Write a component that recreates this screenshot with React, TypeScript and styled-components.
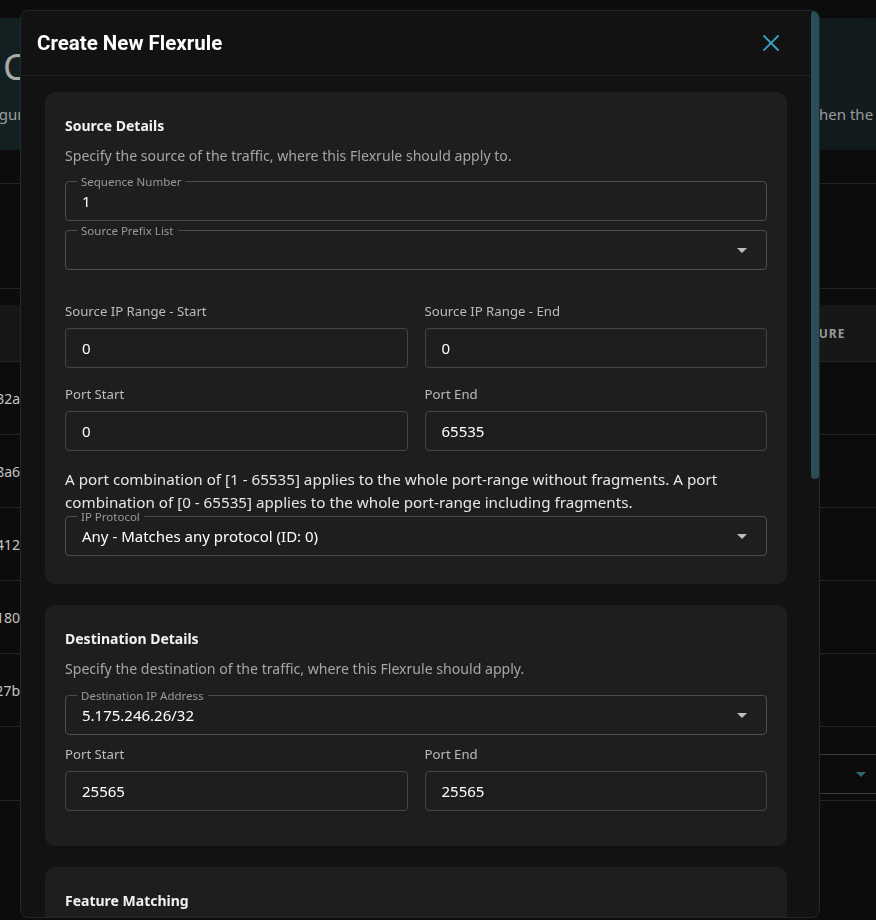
import React from 'react';
import styled, { createGlobalStyle } from 'styled-components';

const GlobalStyle = createGlobalStyle`
  html, body { margin: 0; padding: 0; background: #0c0c0c; overflow: hidden; }
  body { font-family: "Noto Sans", "Open Sans", sans-serif; }
  * { box-sizing: border-box; }
`;

/* ---------- background page ---------- */
const Page = styled.div`
  width: 880px;
  padding-top: 18px;
  color: #bdbdbd;
`;
const Banner = styled.div`
  height: 132px;
  background: linear-gradient(90deg, #132022 0%, #111a1c 100%);
  padding: 29px 0 0 3px;
  overflow: hidden;
`;
const BannerTitle = styled.div`
  font-size: 36px;
  line-height: 40px;
  color: #a9a9a9;
  white-space: nowrap;
`;
const BannerText = styled.div`
  margin-top: 16px;
  font-size: 15px;
  line-height: 22px;
  color: #9c9c9c;
  white-space: nowrap;
  text-indent: -41px;
`;
const BannerLink = styled.span`
  color: #3b82c4;
`;
const Toolbar = styled.div`
  margin-top: 33px;
  height: 106px;
  border-top: 1px solid #1c2729;
  border-bottom: 1px solid #1c2729;
`;
const Table = styled.div`
  margin-top: 16px;
`;
const TRow = styled.div<{ $head?: boolean }>`
  display: grid;
  grid-template-columns: 20px 1fr 93px;
  align-items: center;
  height: ${p => (p.$head ? 57 : 73)}px;
  background: ${p => (p.$head ? '#171717' : 'transparent')};
  border-bottom: 1px solid #242424;
`;
const IdCell = styled.div`
  display: flex;
  justify-content: flex-end;
  white-space: nowrap;
  font-size: 14px;
  color: #c4c4c4;
`;
const HeadCell = styled.div`
  font-size: 12px;
  font-weight: 700;
  letter-spacing: 1px;
  color: #9a9a9a;
  white-space: nowrap;
`;
const TFooter = styled.div`
  height: 74px;
  padding-top: 27px;
  display: flex;
  justify-content: flex-end;
  border-bottom: 1px solid #242424;
`;
const PagerSelect = styled.div`
  width: 300px;
  height: 40px;
  border: 1px solid #3a3a3a;
  border-radius: 4px;
  display: flex;
  align-items: center;
  justify-content: flex-end;
  padding-right: 13px;
`;

/* ---------- modal ---------- */
const Overlay = styled.div`
  position: fixed;
  inset: 0;
  display: flex;
  align-items: flex-start;
  padding: 10px 0 0 20px;
`;
const Modal = styled.div`
  width: 800px;
  height: 908px;
  background: #121212;
  border: 1px solid #1c2a2d;
  border-radius: 8px;
  display: flex;
  overflow: hidden;
`;
const ScrollArea = styled.div`
  flex: 1;
  min-width: 0;
  overflow-y: auto;
  scrollbar-width: none;
  &::-webkit-scrollbar { display: none; }
`;
const ScrollRail = styled.div`
  width: 8px;
  flex: none;
`;
const ScrollThumb = styled.div`
  height: 468px;
  background: #2a4d57;
  border-radius: 4px;
`;
const Header = styled.div`
  height: 65px;
  display: flex;
  align-items: center;
  justify-content: space-between;
  padding: 0 20px 0 16px;
  border-bottom: 1px solid #222;
`;
const Title = styled.h2`
  margin: 0;
  font-family: Roboto, "Noto Sans", sans-serif;
  font-size: 20.5px;
  font-weight: 700;
  color: #fff;
`;
const CloseButton = styled.button`
  width: 40px;
  height: 40px;
  border: 0;
  background: transparent;
  display: flex;
  align-items: center;
  justify-content: center;
  padding: 0;
  cursor: pointer;
`;
const Body = styled.div`
  padding: 16px 24px 24px;
  display: flex;
  flex-direction: column;
  gap: 21px;
`;
const Card = styled.section<{ $pb: number }>`
  background: #1e1e1e;
  border-radius: 10px;
  padding: 23px 20px ${p => p.$pb}px;
`;
const CardTitle = styled.h3`
  margin: 0 0 8px;
  font-size: 14px;
  line-height: 22px;
  font-weight: 700;
  color: #f2f2f2;
`;
const CardSub = styled.p<{ $mb?: number }>`
  margin: 0 0 ${p => p.$mb ?? 14}px;
  font-size: 14.1px;
  line-height: 22px;
  color: #a6a6a6;
`;
const Outlined = styled.div<{ $mt?: number }>`
  position: relative;
  height: 40px;
  margin-top: ${p => p.$mt ?? 0}px;
  border: 1px solid #4d4d4d;
  border-radius: 4px;
  display: flex;
  align-items: center;
  justify-content: space-between;
  padding: 0 19px 0 16px;
  font-size: 15px;
  color: #fff;
`;
const FloatLabel = styled.span`
  position: absolute;
  top: -7px;
  left: 11px;
  padding: 0 4px;
  background: #1e1e1e;
  font-size: 11.5px;
  line-height: 13px;
  color: #9a9a9a;
`;
const Caret = styled.span<{ $color?: string }>`
  width: 0;
  height: 0;
  border-left: 5px solid transparent;
  border-right: 5px solid transparent;
  border-top: 5px solid ${p => p.$color ?? '#bdbdbd'};
`;
const Grid2 = styled.div<{ $mt: number }>`
  margin-top: ${p => p.$mt}px;
  display: grid;
  grid-template-columns: 1fr 1fr;
  column-gap: 17px;
  row-gap: 17px;
`;
const Field = styled.label`
  display: flex;
  flex-direction: column;
`;
const FieldLabel = styled.span`
  font-size: 13.2px;
  line-height: 18px;
  color: #bcbcbc;
  margin-bottom: 8px;
`;
const Input = styled.div`
  height: 40px;
  border: 1px solid #454545;
  border-radius: 4px;
  padding: 0 16px;
  display: flex;
  align-items: center;
  font-size: 15px;
  color: #fff;
`;
const Note = styled.p`
  margin: 17px 0 0;
  font-size: 15.2px;
  line-height: 23px;
  color: #e6e6e6;
`;
const Footer = styled.div`
  display: flex;
  justify-content: flex-end;
  gap: 12px;
  padding: 8px 0 0;
`;
const Button = styled.button<{ $primary?: boolean }>`
  height: 38px;
  padding: 0 18px;
  border-radius: 4px;
  border: 1px solid ${p => (p.$primary ? '#2f8fb0' : '#444')};
  background: ${p => (p.$primary ? '#2f8fb0' : 'transparent')};
  color: #fff;
  font-family: inherit;
  font-size: 14px;
`;

const CloseIcon = () => (
  <svg width="16" height="16" viewBox="0 0 16 16">
    <path d="M1 1 L15 15 M15 1 L1 15" stroke="#3ba3c4" strokeWidth="1.8" strokeLinecap="square" />
  </svg>
);

const SelectField = ({ label, value, mt }: { label: string; value?: string; mt?: number }) => (
  <Outlined $mt={mt}>
    <FloatLabel>{label}</FloatLabel>
    <span>{value}</span>
    <Caret />
  </Outlined>
);

const TextField = ({ label, value, mt }: { label: string; value: string; mt?: number }) => (
  <Outlined $mt={mt}>
    <FloatLabel>{label}</FloatLabel>
    <span>{value}</span>
  </Outlined>
);

const LabeledInput = ({ label, value }: { label: string; value: string }) => (
  <Field>
    <FieldLabel>{label}</FieldLabel>
    <Input>{value}</Input>
  </Field>
);

const ids = ['d91e4f32a', '7c03b58a6', 'a5e29c412', '0f6bd7180', 'e38a1c27b'];

export default function App() {
  return (
    <>
      <GlobalStyle />
      <Page>
        <Banner>
          <BannerTitle>Custom Flexrules</BannerTitle>
          <BannerText>
            Configure Flexrules to filter the traffic towards your services. Rules are evaluated in the order of their sequence number, when the <BannerLink>Flexrule</BannerLink>
          </BannerText>
        </Banner>
        <Toolbar />
        <Table>
          <TRow $head>
            <span />
            <span />
            <HeadCell>FEATURE</HeadCell>
          </TRow>
          {ids.map(id => (
            <TRow key={id}>
              <IdCell>{id}</IdCell>
              <span />
              <span />
            </TRow>
          ))}
          <TFooter>
            <PagerSelect>
              <Caret $color="#2c6776" />
            </PagerSelect>
          </TFooter>
        </Table>
      </Page>

      <Overlay>
        <Modal role="dialog" aria-label="Create New Flexrule">
          <ScrollArea>
            <Header>
              <Title>Create New Flexrule</Title>
              <CloseButton aria-label="Close">
                <CloseIcon />
              </CloseButton>
            </Header>
            <Body>
              <Card $pb={28}>
                <CardTitle>Source Details</CardTitle>
                <CardSub>Specify the source of the traffic, where this Flexrule should apply to.</CardSub>
                <TextField label="Sequence Number" value="1" />
                <SelectField label="Source Prefix List" mt={9} />
                <Grid2 $mt={32}>
                  <LabeledInput label="Source IP Range - Start" value="0" />
                  <LabeledInput label="Source IP Range - End" value="0" />
                  <LabeledInput label="Port Start" value="0" />
                  <LabeledInput label="Port End" value="65535" />
                </Grid2>
                <Note>
                  A port combination of [1 - 65535] applies to the whole port-range without fragments. A port combination of [0 - 65535] applies to the whole port-range including fragments.
                </Note>
                <SelectField label="IP Protocol" value="Any - Matches any protocol (ID: 0)" mt={2} />
              </Card>

              <Card $pb={35}>
                <CardTitle>Destination Details</CardTitle>
                <CardSub $mb={15}>Specify the destination of the traffic, where this Flexrule should apply.</CardSub>
                <SelectField label="Destination IP Address" value="5.175.246.26/32" />
                <Grid2 $mt={10}>
                  <LabeledInput label="Port Start" value="25565" />
                  <LabeledInput label="Port End" value="25565" />
                </Grid2>
              </Card>

              <Card $pb={28}>
                <CardTitle>Feature Matching</CardTitle>
                <CardSub>Optionally match packets by specific features. Leave the fields empty to match every packet.</CardSub>
                <SelectField label="TCP Flags" value="Any" />
                <Grid2 $mt={20}>
                  <LabeledInput label="Packet Length - Min" value="0" />
                  <LabeledInput label="Packet Length - Max" value="65535" />
                  <LabeledInput label="TTL - Min" value="0" />
                  <LabeledInput label="TTL - Max" value="255" />
                </Grid2>
                <SelectField label="Payload Pattern" mt={24} />
              </Card>

              <Card $pb={28}>
                <CardTitle>Action</CardTitle>
                <CardSub>Choose what should happen with traffic matching this Flexrule.</CardSub>
                <SelectField label="Action" value="Drop" />
                <Grid2 $mt={20}>
                  <LabeledInput label="Rate Limit (pps)" value="0" />
                  <LabeledInput label="Rate Limit (bps)" value="0" />
                </Grid2>
              </Card>

              <Footer>
                <Button>Cancel</Button>
                <Button $primary>Create Flexrule</Button>
              </Footer>
            </Body>
          </ScrollArea>
          <ScrollRail>
            <ScrollThumb />
          </ScrollRail>
        </Modal>
      </Overlay>
    </>
  );
}
